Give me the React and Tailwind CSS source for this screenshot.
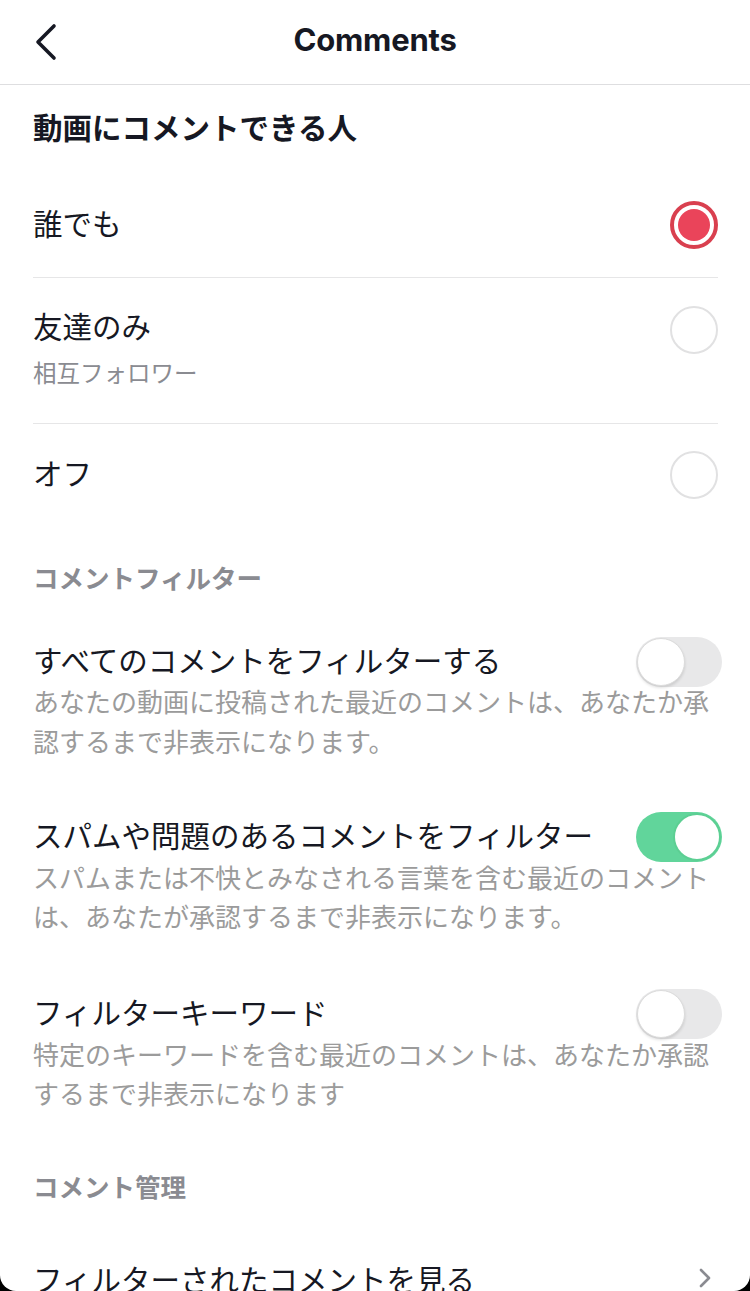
import { useState } from "react";

const JP = "font-['Noto_Sans_CJK_JP','Noto_Sans',sans-serif]";

function Radio({ checked, className = "" }) {
  if (checked) {
    return (
      <span
        className={`flex h-[48px] w-[48px] shrink-0 items-center justify-center rounded-full border-[4px] border-[#d9404f] bg-white ${className}`}
      >
        <span className="h-[32px] w-[32px] rounded-full bg-[#ea445a]" />
      </span>
    );
  }
  return <span className={`h-[48px] w-[48px] shrink-0 rounded-full border-[2px] border-[#e1e1e2] bg-white ${className}`} />;
}

function Toggle({ on }) {
  return (
    <span
      className={`-mr-[4px] flex h-[50px] w-[86px] shrink-0 items-center rounded-full px-[1px] ${
        on ? "justify-end bg-[#61d59b]" : "justify-start bg-[#e8e8e9]"
      }`}
    >
      <span
        className={`h-[48px] w-[48px] rounded-full bg-white ${
          on ? "border-[2px] border-[#5ccf93]" : "border border-[#dcdcdc] shadow-[0_2px_3px_rgba(0,0,0,0.12)]"
        }`}
      />
    </span>
  );
}

function FilterRow({ title, lines, on, mt, lh, descMt }) {
  return (
    <div className={mt}>
      <div className="flex items-center justify-between">
        <span className="whitespace-nowrap pb-[6px] text-[29.5px] leading-[40px] text-[#161823]">{title}</span>
        <Toggle on={on} />
      </div>
      <div className={`${descMt} text-[26px] text-[#9b9b9b]`}>
        {lines.map((l) => (
          <div key={l} className={`whitespace-nowrap ${lh}`}>
            {l}
          </div>
        ))}
      </div>
    </div>
  );
}

export default function App() {
  const [choice] = useState("all");

  return (
    <div className={`relative h-[1291px] w-[750px] overflow-hidden bg-white ${JP}`}>
      <header className="grid h-[85px] grid-cols-[1fr_auto_1fr] items-center border-b border-[#dedee0]">
        <button className="flex h-full items-center pl-[33px]">
          <svg width="26" height="38" viewBox="0 0 26 38" fill="none">
            <path d="M21 3 L5 19 L21 35" stroke="#161823" strokeWidth="3.6" strokeLinecap="round" strokeLinejoin="round" />
          </svg>
        </button>
        <h1 className="-mt-[4px] font-['Inter',sans-serif] text-[31px] font-bold tracking-[-0.2px] text-[#161823]">
          Comments
        </h1>
        <span />
      </header>

      <main className="pl-[33px] pr-[32px]">
        <div className="flex h-[87px] items-center pb-[6px]">
          <span className="text-[29.5px] font-bold leading-[40px] text-[#161823]">動画にコメントできる人</span>
        </div>

        {/* 誰でも */}
        <div className="flex h-[106px] items-center justify-between border-b border-[#e6e6e7]">
          <span className="pb-[6px] text-[29.5px] leading-[40px] text-[#161823]">誰でも</span>
          <Radio checked={choice === "all"} />
        </div>

        {/* 友達のみ */}
        <div className="flex h-[146px] items-start justify-between border-b border-[#e6e6e7] pt-[27px]">
          <div className="flex flex-col">
            <span className="text-[29.5px] leading-[40px] text-[#161823]">友達のみ</span>
            <span className="mt-[11px] text-[23.5px] leading-[32px] text-[#8a8b91]">相互フォロワー</span>
          </div>
          <Radio checked={choice === "friends"} className="mt-[1px]" />
        </div>

        {/* オフ */}
        <div className="flex h-[101px] items-center justify-between">
          <span className="pb-[6px] text-[29.5px] leading-[40px] text-[#161823]">オフ</span>
          <Radio checked={choice === "off"} />
        </div>

        <div className="mt-[32px] text-[25.5px] font-bold leading-[40px] text-[#8a8b91]">コメントフィルター</div>

        <FilterRow
          mt="mt-[40px]"
          lh="leading-[40px]"
          descMt="-mt-[6px]"
          title="すべてのコメントをフィルターする"
          lines={["あなたの動画に投稿された最近のコメントは、あなたか承", "認するまで非表示になります。"]}
          on={false}
        />
        <FilterRow
          mt="mt-[51px]"
          lh="leading-[39px]"
          descMt="-mt-[5px]"
          title="スパムや問題のあるコメントをフィルター"
          lines={["スパムまたは不快とみなされる言葉を含む最近のコメント", "は、あなたが承認するまで非表示になります。"]}
          on
        />
        <FilterRow
          mt="mt-[54px]"
          lh="leading-[39px]"
          descMt="-mt-[5px]"
          title="フィルターキーワード"
          lines={["特定のキーワードを含む最近のコメントは、あなたか承認", "するまで非表示になります"]}
          on={false}
        />

        <div className="mt-[54px] text-[25.5px] font-bold leading-[40px] text-[#8a8b91]">コメント管理</div>

        <div className="mt-[52px] flex items-center justify-between">
          <span className="text-[29.5px] leading-[40px] text-[#161823]">フィルターされたコメントを見る</span>
          <svg width="14" height="22" viewBox="0 0 14 22" fill="none" className="mr-[6px]">
            <path d="M3 3 L11 11 L3 19" stroke="#8a8b91" strokeWidth="2.6" strokeLinecap="round" strokeLinejoin="round" />
          </svg>
        </div>
      </main>

      <div className="pointer-events-none absolute inset-0 rounded-b-[16px] shadow-[0_0_0_40px_#000]" />
    </div>
  );
}
